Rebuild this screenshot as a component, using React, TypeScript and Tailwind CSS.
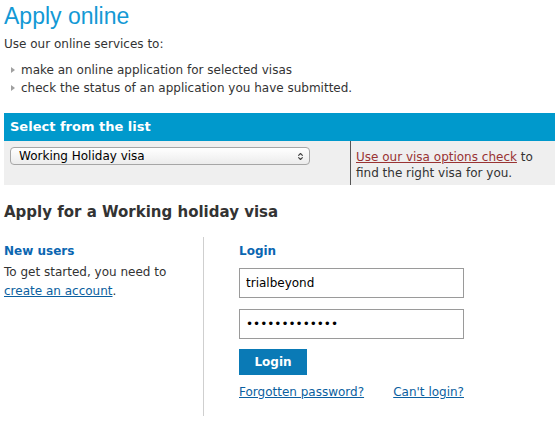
import { ChevronsUpDown } from "lucide-react";

const font = { fontFamily: '"DejaVu Sans", Verdana, sans-serif' };

function Bullet({ children }: { children: React.ReactNode }) {
  return (
    <li className="flex items-center h-[18px]">
      <span className="ml-[7px] mr-[6px] w-0 h-0 border-y-[3px] border-l-[4px] border-y-transparent border-l-[#a0a0a0]" />
      <span>{children}</span>
    </li>
  );
}

export default function App() {
  return (
    <div
      className="w-[559px] h-[422px] bg-white text-[#333] text-[12px] overflow-hidden"
      style={font}
    >
      <div className="pl-[4px] pr-[4px]">
        <h1 className="pt-[2px] h-[29px] leading-[28px] text-[23px] text-[#1399d5] font-['Liberation_Sans',Arial,sans-serif]">
          Apply online
        </h1>
        <p className="mt-[6px] leading-[18px]">Use our online services to:</p>
        <ul className="mt-[8px]">
          <Bullet>make an online application for selected visas</Bullet>
          <Bullet>check the status of an application you have submitted.</Bullet>
        </ul>

        <div className="mt-[16px]">
          <div className="h-[28px] bg-[#0099cc] pl-[6px] flex items-center text-white font-bold text-[13px]">
            Select from the list
          </div>
          <div className="h-[44px] bg-[#efefef] flex">
            <div className="w-[346px] pl-[6px] pt-[6px]">
              <div className="w-[300px] h-[18px] rounded-[4px] border border-[#a6a6a6] bg-gradient-to-b from-white to-[#ececec] flex items-center justify-between pl-[8px] pr-[4px] text-[12px] text-black">
                <span>Working Holiday visa</span>
                <ChevronsUpDown size={9} strokeWidth={3} className="text-[#444]" />
              </div>
            </div>
            <div className="flex-1 border-l border-[#555] pl-[5px] pt-[8px] leading-[16px]">
              <div>
                <a href="#" className="text-[#993333] underline">
                  Use our visa options check
                </a>
                <span> to</span>
              </div>
              <div>find the right visa for you.</div>
            </div>
          </div>
        </div>

        <h2 className="mt-[18px] leading-[18px] text-[15px] font-bold text-[#333]">
          Apply for a Working holiday visa
        </h2>

        <div className="mt-[16px] flex h-[179px]">
          <div className="w-[199px] pt-[6px]">
            <div className="font-bold text-[#0b66b1] leading-[16px]">New users</div>
            <p className="mt-[4px] leading-[19px]">
              To get started, you need to
              <br />
              <a href="#" className="text-[#0b5fa0] underline">
                create an account
              </a>
              .
            </p>
          </div>
          <div className="border-l border-[#cfcfcf] pl-[35px] pt-[6px]">
            <div className="font-bold text-[#0b66b1] leading-[16px]">Login</div>
            <input
              readOnly
              value="trialbeyond"
              className="mt-[9px] block w-[225px] h-[30px] border border-[#9a9a9a] px-[6px] text-[12px] text-black outline-none"
              style={font}
            />
            <input
              readOnly
              type="password"
              value="aaaaaaaaaaaaa"
              className="mt-[11px] block w-[225px] h-[30px] border border-[#9a9a9a] px-[6px] text-[12px] text-black outline-none"
              style={font}
            />
            <button className="mt-[10px] block w-[68px] h-[26px] bg-[#0a7ab6] text-white font-bold text-[12px]">
              Login
            </button>
            <div className="mt-[8px] w-[225px] flex justify-between leading-[18px]">
              <a href="#" className="text-[#0b5fa0] underline">
                Forgotten password?
              </a>
              <a href="#" className="text-[#0b5fa0] underline">
                Can't login?
              </a>
            </div>
          </div>
        </div>
      </div>
    </div>
  );
}
